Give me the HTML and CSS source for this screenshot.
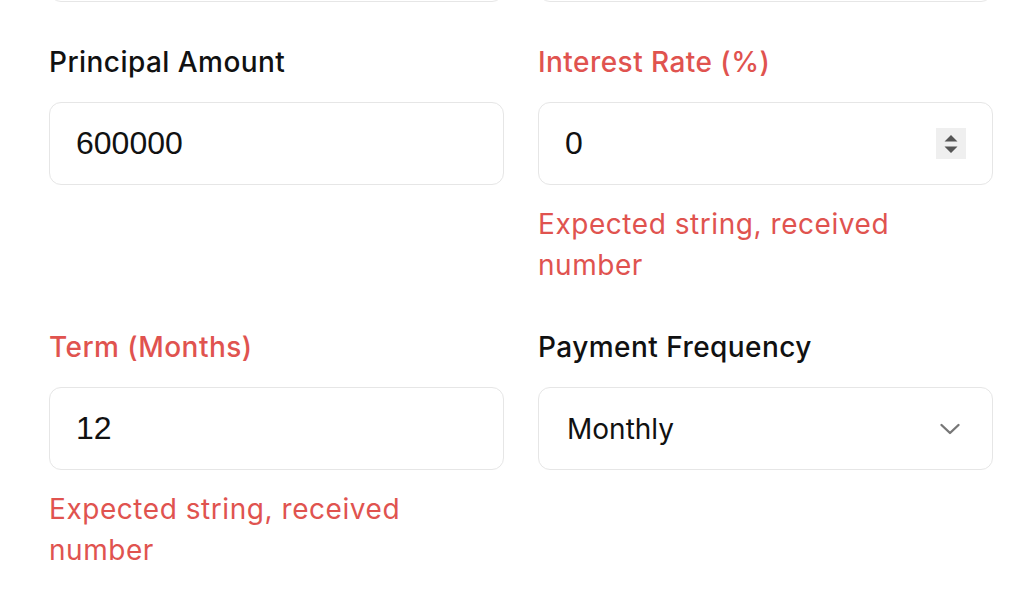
FILE: index.html
```html
<!DOCTYPE html>
<html lang="en">
<head>
<meta charset="utf-8">
<title>Loan form</title>
<link rel="stylesheet" href="styles.css">
</head>
<body>
<form class="form">
  <div class="field field-prev"><div class="box"></div></div>
  <div class="field field-prev"><div class="box"></div></div>

  <div class="field">
    <label class="label">Principal Amount</label>
    <div class="box"><input class="value" type="text" value="600000" readonly></div>
  </div>
  <div class="field">
    <label class="label label-error">Interest Rate (%)</label>
    <div class="box">
      <input class="value" type="text" value="0" readonly>
      <span class="spinner">
        <svg width="14" height="20" viewBox="0 0 14 20"><path d="M7 1 L13.5 7.5 L0.5 7.5 Z M0.5 12.5 L13.5 12.5 L7 19 Z" fill="#555"/></svg>
      </span>
    </div>
    <p class="error">Expected string, received number</p>
  </div>

  <div class="field">
    <label class="label label-error">Term (Months)</label>
    <div class="box"><input class="value" type="text" value="12" readonly></div>
    <p class="error">Expected string, received number</p>
  </div>
  <div class="field">
    <label class="label">Payment Frequency</label>
    <div class="box box-select">
      <span class="select-text">Monthly</span>
      <svg class="chevron" width="22" height="14" viewBox="0 0 22 14"><path d="M2.5 3 L11 11 L19.5 3" fill="none" stroke="#777" stroke-width="2.4" stroke-linecap="round" stroke-linejoin="round"/></svg>
    </div>
  </div>
</form>
</body>
</html>
```

FILE: styles.css
```css
html, body {
  margin: 0;
  padding: 0;
  background: #ffffff;
}

.form {
  display: grid;
  grid-template-columns: 455px 455px;
  column-gap: 34px;
  row-gap: 42px;
  padding-left: 49px;
  align-items: start;
  font-family: "Inter", "Noto Sans", sans-serif;
}

.field {
  display: flex;
  flex-direction: column;
}

.field-prev {
  margin-top: -81px;
  margin-bottom: -2px;
}

.label {
  font-size: 28px;
  line-height: 40px;
  font-weight: 500;
  letter-spacing: 0.45px;
  color: #111111;
  margin-bottom: 20px;
}

.label-error {
  color: #e0534f;
}

.box {
  box-sizing: border-box;
  height: 83px;
  border: 1.5px solid #e6e6e6;
  border-radius: 12px;
  display: flex;
  align-items: center;
  padding: 0 26px 0 26px;
  background: #fff;
}

.value {
  flex: 1;
  min-width: 0;
  border: none;
  outline: none;
  background: transparent;
  padding: 0;
  margin: 0;
  font-family: "Liberation Sans", Arial, sans-serif;
  font-size: 32px;
  color: #111111;
}

.spinner {
  width: 30px;
  height: 31px;
  background: #efefef;
  display: flex;
  align-items: center;
  justify-content: center;
}

.box-select {
  justify-content: space-between;
  padding: 0 31px 0 28px;
}

.select-text {
  font-size: 28px;
  color: #111111;
}

.error {
  margin: 19px 0 0 0;
  font-size: 28px;
  line-height: 40.5px;
  letter-spacing: 0.55px;
  color: #e0534f;
  max-width: 400px;
}
```
